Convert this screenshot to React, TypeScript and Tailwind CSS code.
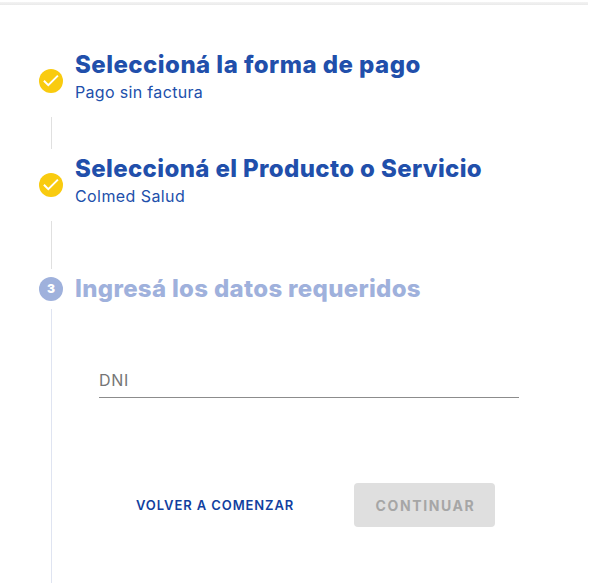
const completedSteps = [
  {
    title: "Seleccioná la forma de pago",
    titleClass: "tracking-[0.46px]",
    detail: "Pago sin factura",
    detailClass: "tracking-[0.33px]",
    connector: "h-8",
  },
  {
    title: "Seleccioná el Producto o Servicio",
    titleClass: "tracking-[0.37px]",
    detail: "Colmed Salud",
    detailClass: "tracking-[0.42px]",
    connector: "h-12",
  },
];

function CheckBadge() {
  return (
    <span className="flex size-6 shrink-0 items-center justify-center rounded-full bg-[#f9cb0f]">
      <svg viewBox="0 0 24 24" className="size-6 fill-none stroke-white stroke-2">
        <path d="M4.9 11.8l4.4 4.4L18.9 6.6" />
      </svg>
    </span>
  );
}

export default function App() {
  return (
    <div className="flex h-[583px] w-[595px] flex-col overflow-hidden bg-white font-['Inter','Liberation_Sans',sans-serif]">
      <div className="mt-[2px] h-[3px] w-[588px] shrink-0 bg-linear-to-b from-[#f3f3f3] to-[#eaeaea]" />

      <main className="flex flex-1 flex-col pt-10 pl-[39px]">
        {/* Completed steps */}
        {completedSteps.map((step) => (
          <section key={step.title}>
            <div className="flex h-[72px] items-center gap-3">
              <CheckBadge />
              <div className="h-full pt-[6px] whitespace-nowrap">
                <h2 className={`text-2xl/7 font-extrabold text-[#214fab] ${step.titleClass}`}>
                  {step.title}
                </h2>
                <p className={`text-base/[26px] text-[#214fab] ${step.detailClass}`}>
                  {step.detail}
                </p>
              </div>
            </div>
            <div className={`ml-3 w-px bg-[#e0e0e0] ${step.connector}`} />
          </section>
        ))}

        {/* Current step */}
        <section className="flex flex-1 flex-col">
          <div className="flex h-10 items-center gap-3">
            <span className="flex size-6 shrink-0 items-center justify-center rounded-full bg-[#9fb1dc] text-xs font-black text-white">
              3
            </span>
            <h2 className="text-2xl/7 font-extrabold tracking-[0.32px] whitespace-nowrap text-[#9fb1dc]">
              Ingresá los datos requeridos
            </h2>
          </div>

          <form className="ml-3 flex flex-1 flex-col border-l border-[#dfe4f1] pt-[61px] pl-[47px]">
            <div className="h-7 w-[420px] border-b border-[#8c8c8c] text-base/5 tracking-[0.7px] text-[#757575]">
              DNI
            </div>
            <div className="mt-[85px] flex h-11 items-center">
              <button
                type="button"
                className="w-[234px] pt-[2px] pl-[37px] text-left text-[13px] font-semibold tracking-[0.9px] whitespace-nowrap text-[#123f9f]"
              >
                VOLVER A COMENZAR
              </button>
              <button
                type="button"
                disabled
                className="ml-[21px] h-11 w-[141px] rounded bg-[#dfdfdf] pt-px pl-[2px] text-sm font-bold tracking-[1.6px] text-[#a6a6a6]"
              >
                CONTINUAR
              </button>
            </div>
          </form>
        </section>
      </main>
    </div>
  );
}
